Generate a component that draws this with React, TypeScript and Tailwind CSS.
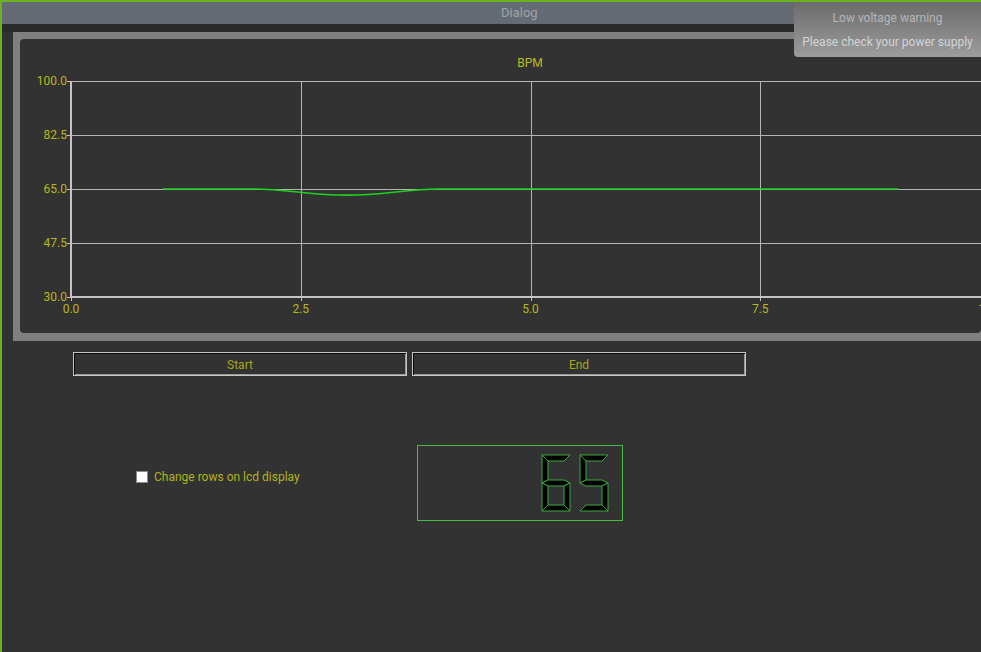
import React from "react";

// chart mapping (svg coords, svg origin at page x=20 / y=39)
const X = (t: number) => 51 + t * 91.9;
const Y = (v: number) => 42 + ((100 - v) * 216) / 70;

const yTicks = [100, 82.5, 65, 47.5, 30];
const xTicks = [0, 2.5, 5, 7.5, 10];

function BpmChart(): React.JSX.Element {
  const curve = `M${X(1)} ${Y(65)} L${X(2)} ${Y(65)} C${X(2.35)} ${Y(65)} ${X(2.6)} ${Y(63)} ${X(3)} ${Y(63)} C${X(3.4)} ${Y(63)} ${X(3.65)} ${Y(65)} ${X(4)} ${Y(65)} L${X(9)} ${Y(65)}`;
  return (
    <svg width={961} height={294} className="block" fontFamily="Roboto, sans-serif">
      <text x={510} y={25} textAnchor="middle" dominantBaseline="middle" fontSize={12} fill="#bcbc1e">
        BPM
      </text>
      {yTicks.slice(0, 4).map((v) => (
        <line key={"h" + v} x1={51} x2={961} y1={Math.round(Y(v)) + 0.5} y2={Math.round(Y(v)) + 0.5} stroke="#b4b4b4" strokeWidth={1} />
      ))}
      {xTicks.slice(1).map((t) => (
        <line key={"v" + t} x1={Math.round(X(t)) + 0.5} x2={Math.round(X(t)) + 0.5} y1={42} y2={262} stroke="#b4b4b4" strokeWidth={1} />
      ))}
      <line x1={51} x2={51} y1={42} y2={259} stroke="#c4c4c4" strokeWidth={2} />
      <line x1={50} x2={961} y1={258} y2={258} stroke="#c4c4c4" strokeWidth={2} />
      {yTicks.map((v) => (
        <g key={"yl" + v}>
          <line x1={47} x2={51} y1={Math.round(Y(v)) + 0.5} y2={Math.round(Y(v)) + 0.5} stroke="#c4c4c4" />
          <text x={47} y={Y(v) + 1} textAnchor="end" dominantBaseline="middle" fontSize={12} fill="#b8b81c">
            {v.toFixed(1)}
          </text>
        </g>
      ))}
      {xTicks.map((t) => (
        <g key={"xl" + t}>
          <line x1={Math.round(X(t)) + 0.5} x2={Math.round(X(t)) + 0.5} y1={258} y2={262} stroke="#c4c4c4" />
          <text x={X(t)} y={271} textAnchor="middle" dominantBaseline="middle" fontSize={12} fill="#b8b81c">
            {t.toFixed(1)}
          </text>
        </g>
      ))}
      <path d={curve} fill="none" stroke="#1ed21e" strokeWidth={1.6} />
    </svg>
  );
}

// seven segment digit, w=28 h=56
const W = 28;
const H = 56;
const T = 6;
const M = H / 2;
const segs: Record<string, number[][]> = {
  a: [[0, 0], [W, 0], [W - T, T], [T, T]],
  b: [[W, 0], [W, M], [W - T, M - T / 2], [W - T, T]],
  c: [[W, M], [W, H], [W - T, H - T], [W - T, M + T / 2]],
  d: [[0, H], [T, H - T], [W - T, H - T], [W, H]],
  e: [[0, M], [T, M + T / 2], [T, H - T], [0, H]],
  f: [[0, 0], [T, T], [T, M - T / 2], [0, M]],
  g: [[0, M], [T, M - T / 2], [W - T, M - T / 2], [W, M], [W - T, M + T / 2], [T, M + T / 2]],
};
const digitSegs: Record<string, string> = { "6": "afgedc", "5": "afgcd" };

function Digit({ d, x }: { d: string; x: number }): React.JSX.Element {
  return (
    <g transform={`translate(${x} 1)`}>
      {digitSegs[d].split("").map((s) => (
        <polygon
          key={s}
          points={segs[s].map((p) => p.join(",")).join(" ")}
          fill="#030303"
          stroke="#3aa83a"
          strokeWidth={1}
          strokeLinejoin="round"
        />
      ))}
    </g>
  );
}

function ActionButton({ label }: { label: string }): React.JSX.Element {
  return (
    <button className="w-[334px] h-[24px] pt-[1px] border border-[#c6c6c6] shadow-[inset_1px_1px_0_#0a0a0a,inset_-1px_-1px_0_#9a9a9a] bg-[#323232] text-[12px] text-[#a6a61a]">
      {label}
    </button>
  );
}

export default function App(): React.JSX.Element {
  return (
    <div className="relative w-[981px] h-[652px] overflow-hidden bg-[#323232] border-l-2 border-t-2 border-[#6cb21c] font-['Roboto',sans-serif]">
      <div className="h-[22px] bg-[#646b74] flex items-center pl-[499px] text-[13px] text-[#9ea3a9]">
        Dialog
      </div>
      <div className="h-[8px] bg-[#2a2a2a]" />
      <div className="ml-[11px] bg-[#808080] pt-[7px] pl-[7px] pb-[8px]">
        <div className="h-[294px] rounded-[4px] bg-[#323232] overflow-hidden">
          <BpmChart />
        </div>
      </div>
      <div className="mt-[11px] ml-[71px] flex gap-[5px]">
        <ActionButton label="Start" />
        <ActionButton label="End" />
      </div>
      <div className="mt-[69px] flex">
        <div className="w-[415px] pl-[134px] pt-[23px]">
          <label className="flex items-center gap-[6px] text-[12px] text-[#b2b21c]">
            <span className="w-[12px] h-[12px] bg-white border border-[#8a8a8a]" />
            Change rows on lcd display
          </label>
        </div>
        <div className="w-[206px] h-[76px] border border-[#45bb45] flex justify-end pr-[13px] pt-[8px]">
          <svg width={68} height={58}>
            <Digit d="6" x={1} />
            <Digit d="5" x={39} />
          </svg>
        </div>
      </div>
      <div className="absolute top-0 right-0 w-[187px] h-[55px] rounded-bl-[4px] bg-linear-to-b from-[#6b6b6b] to-[#9d9d9d] flex flex-col items-center pt-[8px] gap-[8px] text-[12px]">
        <span className="text-[#b3b7bb] leading-[16px]">Low voltage warning</span>
        <span className="text-[#d2d4d6] leading-[16px]">Please check your power supply</span>
      </div>
    </div>
  );
}
